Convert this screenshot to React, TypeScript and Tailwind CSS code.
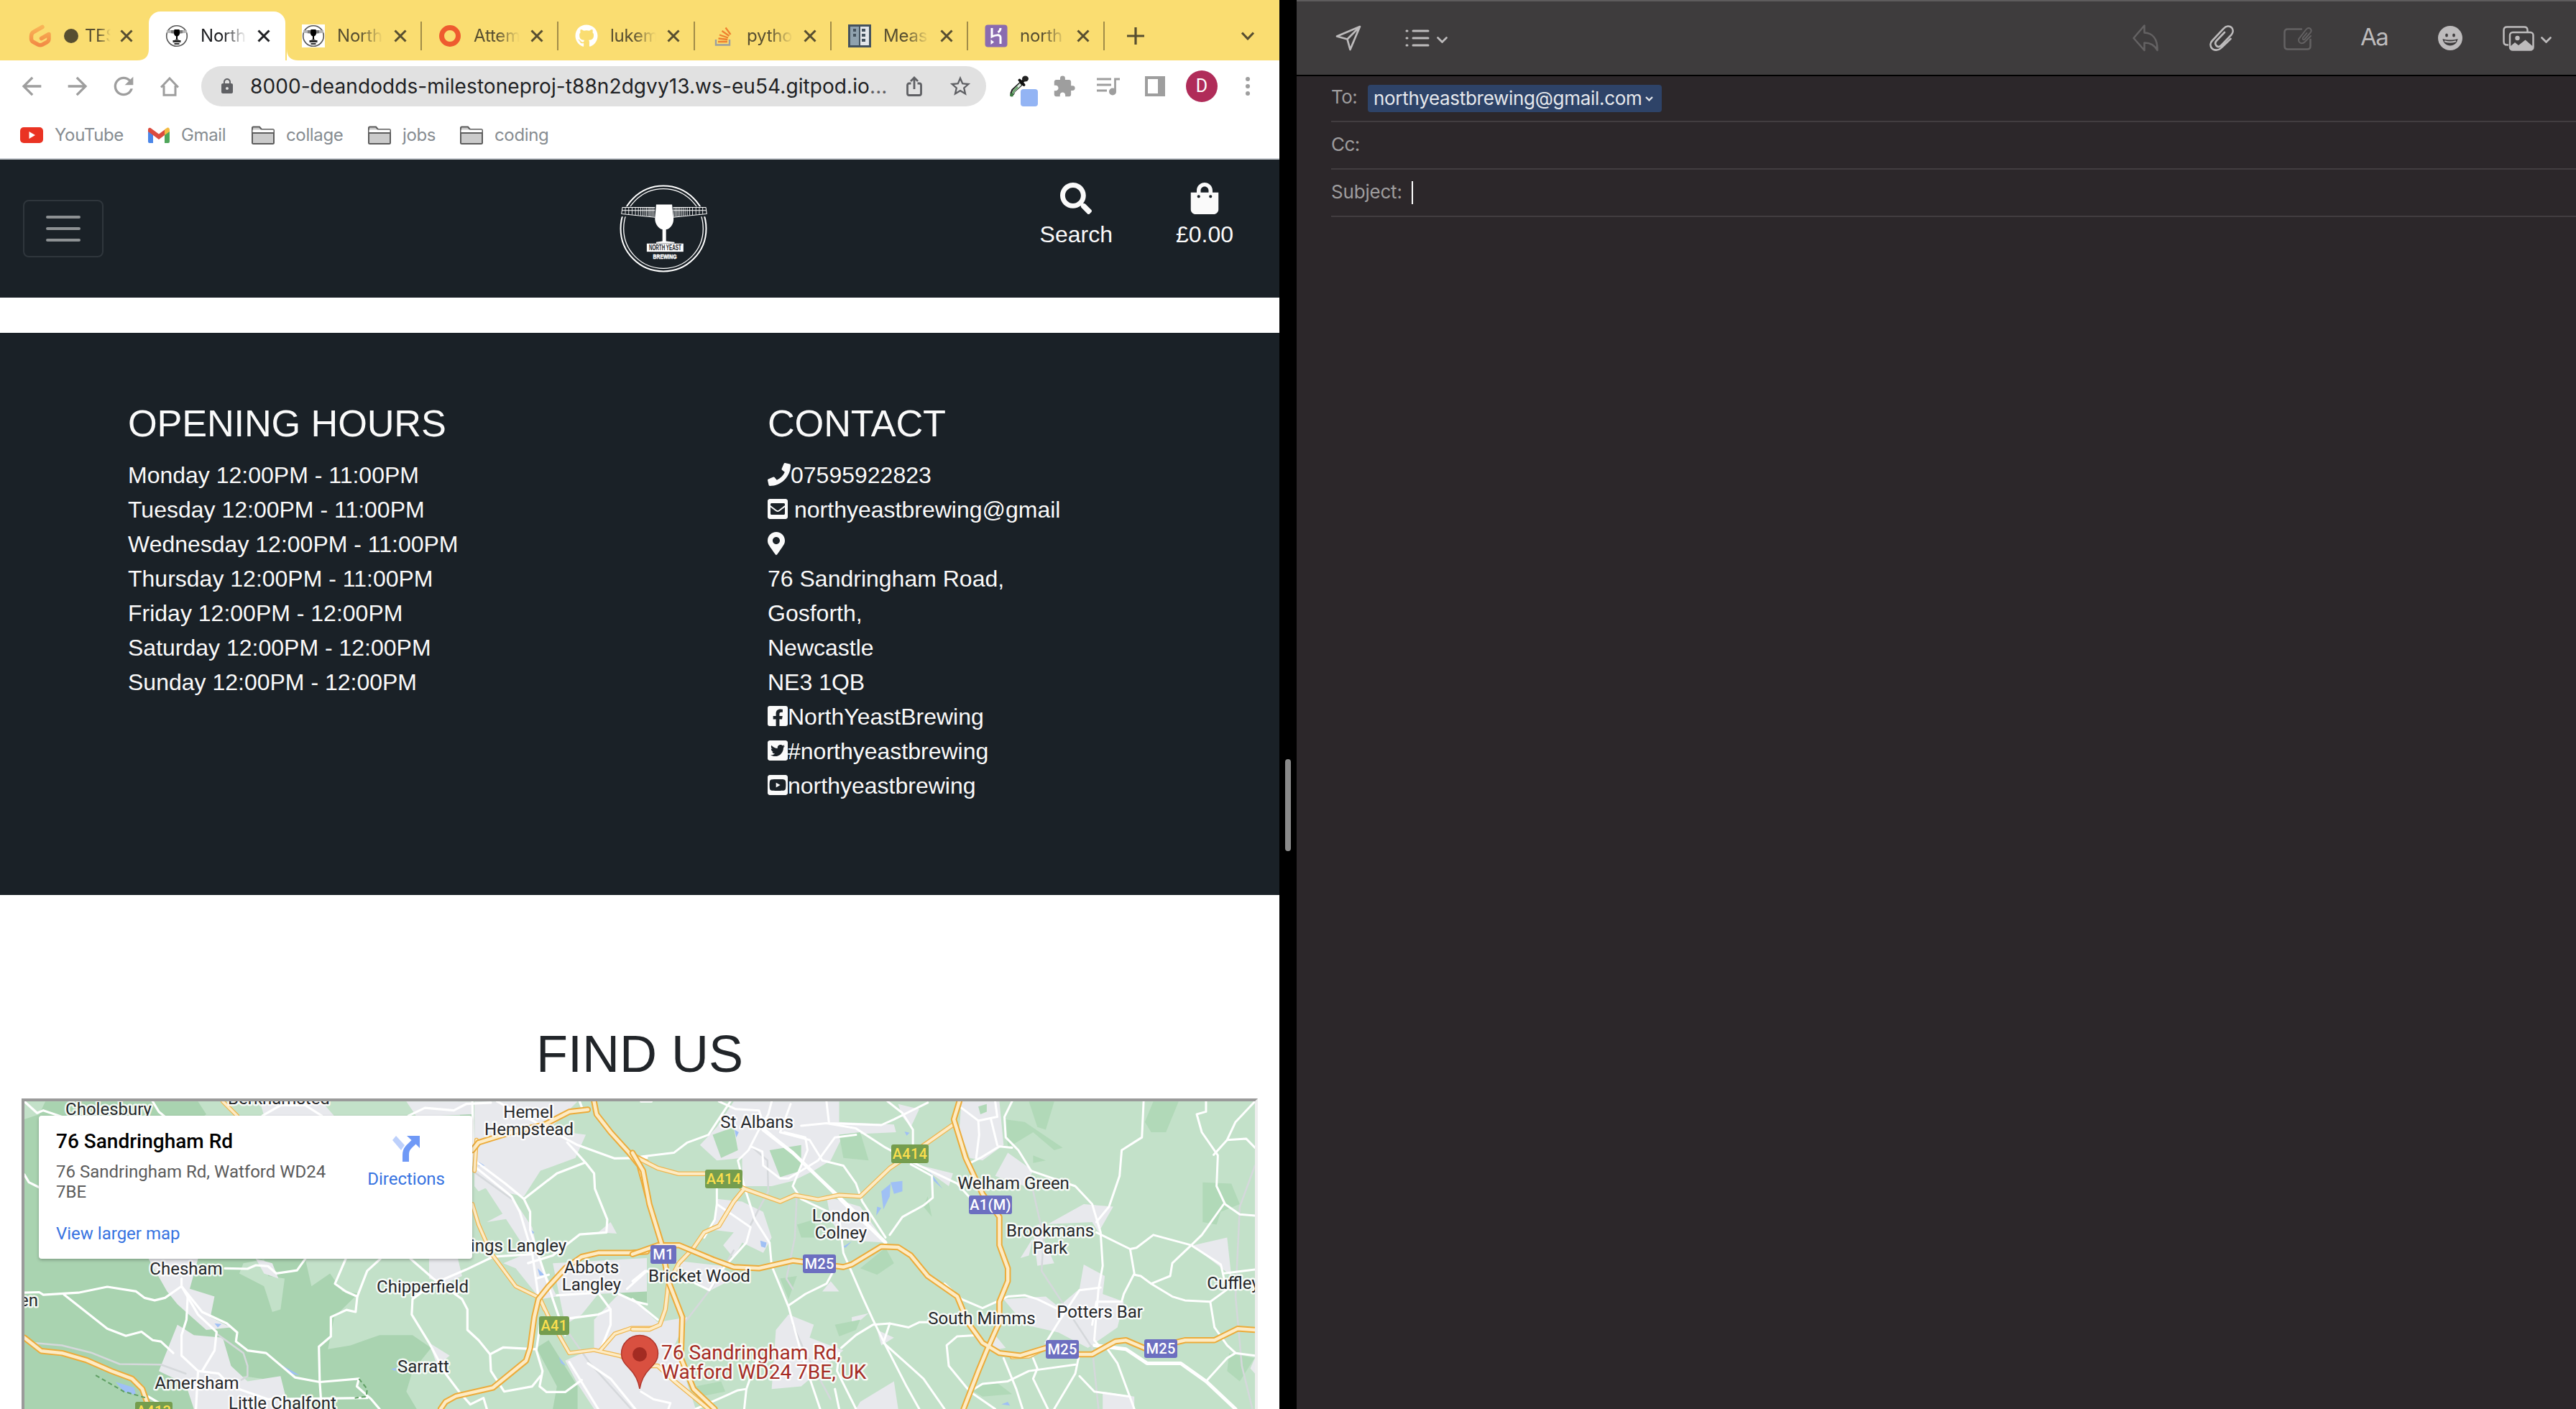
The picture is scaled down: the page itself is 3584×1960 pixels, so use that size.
import React from "react";
import {
  MdArrowBack,
  MdArrowForward,
  MdExtension,
  MdLock,
  MdRefresh,
  MdStarBorder,
} from "react-icons/md";
import {
  FaEnvelopeSquare,
  FaFacebookSquare,
  FaGithub,
  FaMapMarkerAlt,
  FaPhone,
  FaSearch,
  FaShoppingBag,
  FaTwitterSquare,
  FaYoutubeSquare,
} from "react-icons/fa";

/* ---------- brand artwork ---------- */

function BreweryLogo({ className, ink, paper }: { className: string; ink: string; paper: string }) {
  const leftBars = [52, 66, 80, 94, 106, 116, 125, 133, 140, 147, 153, 159, 165, 171];
  return (
    <svg viewBox="28 28 364 364" className={className}>
      <circle cx="210" cy="210" r="177.500" fill="none" stroke={ink} strokeWidth="6" />
      <circle cx="210" cy="210" r="165" fill="none" stroke={ink} strokeWidth="4" />
      <path d="M20 118H400V160H20z" fill={paper} />
      <g fill="none" stroke={ink} strokeWidth="3">
        <path d="M40 122L175 122M38 135H175M37 149L175 163M40 121L36 150" />
        <path d="M386 122L250 122M388 135H250M389 149L250 163M386 121L390 150" />
        {leftBars.map((x) => (
          <path key={x} strokeWidth="2.500" d={`M${x} 121V${148 + (x - 40) * 0.1}M${425 - x} 121V${148 + (x - 40) * 0.1}`} />
        ))}
      </g>
      <path d="M180 110H246L252 165C254 190 240 210 221 214V262L256 266V271H180V266L206 262V214C188 208 174 190 175 165Z" fill={ink} />
      <rect x="141" y="272" width="152" height="34" fill={ink} />
      <text x="217" y="300" textAnchor="middle" textLength="134" lengthAdjust="spacingAndGlyphs" fontFamily="Liberation Sans" fontWeight="700" fontSize="31" fill={paper}>
        NORTH YEAST
      </text>
      <text x="216" y="334" textAnchor="middle" textLength="98" lengthAdjust="spacingAndGlyphs" fontFamily="Liberation Sans" fontWeight="700" fontSize="29" fill={ink} stroke={ink} strokeWidth="1.500">
        BREWING
      </text>
    </svg>
  );
}

/* Simplified mark that stays legible at tab size */
function BreweryFavicon() {
  return (
    <svg viewBox="0 0 32 32" className="size-8 text-[#1b1b1b]" fill="none">
      <circle cx="16" cy="16" r="14.300" stroke="#555" strokeWidth="1.600" />
      <path d="M2 8H13V13L2 11.500zM30 8H19V13L30 11.500z" fill="#b5b5b5" />
      <path d="M8 8H13V12.500L8 12zM24 8H19V12.500L24 12z" fill="#777" />
      <path d="M12.500 7H19.500L20 12C20 15 18 16 17 16.500V20.500L19.500 21.500H12.500L15 20.500V16.500C14 16 12 15 12 12z" fill="#000" />
      <path d="M10.500 22H21.500V25H10.500zM12.500 26H19.500V28H12.500z" fill="#2a2a2a" />
    </svg>
  );
}

function GitpodIcon() {
  return (
    <svg viewBox="0 0 32 32" className="size-8" fill="none">
      <path d="M19 3.500L7.500 10Q3.500 12 3.500 16V20Q3.500 23 6.500 24.500L13 28Q16 29.500 19 28L25.500 24.500Q28 23 28 20V13.500L17.500 19.500" stroke="url(#gp)" strokeWidth="5.500" strokeLinecap="round" strokeLinejoin="round" />
      <defs>
        <linearGradient id="gp" x1="0" y1="0" x2="0" y2="1">
          <stop stopColor="#f9b457" />
          <stop offset="1" stopColor="#f28a45" />
        </linearGradient>
      </defs>
    </svg>
  );
}

function StackIcon() {
  return (
    <svg viewBox="0 0 32 32" className="size-8" fill="none">
      <path d="M6 21V28.500H25V21" stroke="#9a9fa0" strokeWidth="2.400" />
      <path d="M9 24H22M9.500 19.500L22.300 21M11 14.500L23 18.500M14.500 9L24.500 16M19.500 4.500L26.500 14" stroke="#ee8130" strokeWidth="2.300" />
    </svg>
  );
}

function MeasureIcon() {
  return (
    <svg viewBox="0 0 32 32" className="size-8">
      <path d="M0 0H32V32H0z" fill="#44525e" />
      <path d="M3 3H15V29H3z" fill="#8fa1ae" />
      <path d="M17 3H29V29H17z" fill="#e3e6ea" />
      <path d="M7 6h4v4H7zM7 13h4v4H7zM19 6h5v4h-5zM19 13h5v4h-5zM19 20h5v4h-5z" fill="#44525e" />
    </svg>
  );
}

function HerokuIcon() {
  return (
    <svg viewBox="0 0 32 32" className="size-8">
      <rect x="0.500" y="0.500" width="31" height="31" rx="4" fill="#8a6bb0" />
      <path d="M10 5V17C14 15 22 13 22 18V27M22 5C22 8 20 10 18.500 11" fill="none" stroke="#fff" strokeWidth="3" />
      <path d="M8.500 21L13 24.500L8.500 28z" fill="#fff" />
    </svg>
  );
}

/* ---------- browser tab strip ---------- */

type TabProps = { icon: React.ReactNode; title: string; active?: boolean; divider?: boolean; dot?: boolean };

function Tab({ icon, title, active, divider, dot }: TabProps) {
  return (
    <div
      className={
        "relative flex h-[68px] w-[190px] shrink-0 items-center pl-[23px] " +
        (active ? "z-10 rounded-t-[16px] bg-white text-[#202124]" : "text-[#574e30]")
      }
    >
      {active && (
        <svg viewBox="0 0 224 16" className="absolute -left-4 bottom-0 h-4 w-[224px]">
          <path d="M0 16Q16 16 16 0V16zM224 16Q208 16 208 0V16z" fill="#fff" />
        </svg>
      )}
      <div className="flex size-8 items-center justify-center">{icon}</div>
      {dot ? <div className="ml-[17px] size-5 rounded-full bg-[#574e30]" /> : null}
      <div
        className={
          "overflow-hidden text-[24px] leading-8 whitespace-nowrap [mask-image:linear-gradient(to_right,black_50%,transparent)] " +
          (dot ? "ml-[9px] w-[36px] tracking-[-0.5px]" : "ml-[17px] w-[64px] tracking-[-0.2px]")
        }
      >
        {title}
      </div>
      <svg
        viewBox="0 0 18 18"
        className={(dot ? "ml-[13px]" : "ml-[15px]") + " size-[18px]"}
        fill="none"
        stroke="currentColor"
        strokeWidth="3"
      >
        <path d="M1.500 1.500L16.500 16.500M16.500 1.500L1.500 16.500" />
      </svg>
      {divider && <div className="absolute right-0 h-10 w-[2px] bg-[#a18c48]" />}
    </div>
  );
}

function TabStrip() {
  return (
    <div className="flex h-[84px] items-end bg-[#fadd71] pl-[17px]">
      <Tab icon={<GitpodIcon />} title="TES" dot />
      <Tab icon={<BreweryFavicon />} title="North" active />
      <Tab icon={<div className="bg-white"><BreweryFavicon /></div>} title="North" divider />
      <Tab icon={<div className="size-[30px] rounded-full border-[7px] border-[#ee5b2f]" />} title="Attem" divider />
      <Tab icon={<FaGithub className="size-8 text-white" />} title="lukem" divider />
      <Tab icon={<StackIcon />} title="pytho" divider />
      <Tab icon={<MeasureIcon />} title="Meas" divider />
      <Tab icon={<HerokuIcon />} title="north" divider />
      <div className="flex h-[68px] flex-1 items-center justify-between pr-[35px] pl-[31px] text-[#574e30]">
        <svg viewBox="0 0 24 24" className="size-6" stroke="currentColor" strokeWidth="3.200">
          <path d="M12 0V24M0 12H24" />
        </svg>
        <svg viewBox="0 0 18 12" className="h-3 w-[18px]" fill="none" stroke="currentColor" strokeWidth="3">
          <path d="M1 1.500L9 10L17 1.500" />
        </svg>
      </div>
    </div>
  );
}

/* ---------- browser toolbar ---------- */

function AddressBar() {
  return (
    <div className="ml-[31px] flex h-14 w-[1092px] shrink-0 items-center rounded-full bg-[#e1e1e1] pl-6 text-[#5f6064]">
      <MdLock className="size-6 shrink-0" />
      <div className="ml-[20px] w-[882px] shrink-0 text-[28px] leading-8 tracking-[0.080px] whitespace-nowrap text-[#202124]">
        8000-deandodds-milestoneproj-t88n2dgvy13.ws-eu54.gitpod.io<span className="text-[#5f6064]">...</span>
      </div>
      <svg viewBox="0 0 22 28" className="ml-[31px] h-7 w-[22px] shrink-0" fill="none" stroke="currentColor" strokeWidth="2.800">
        <path d="M6.500 10H4Q1.500 10 1.500 12.500V24Q1.500 26.500 4 26.500H18Q20.500 26.500 20.500 24V12.500Q20.500 10 18 10H15.500M11 18V3M6 7L11 2L16 7" />
      </svg>
      <MdStarBorder className="ml-[36px] size-[34px] shrink-0" />
    </div>
  );
}

function Toolbar() {
  return (
    <div className="flex h-[72px] items-center bg-white pl-6 text-[#9e9e9e]">
      <MdArrowBack className="size-10" />
      <MdArrowForward className="ml-6 size-10" />
      <MdRefresh className="ml-6 size-10" />
      <svg viewBox="0 0 26 27" className="ml-[31px] h-[27px] w-[26px]" fill="none" stroke="currentColor" strokeWidth="3">
        <path d="M1 14.500L13 2L25 14.500M5 12V25.300H21V12" />
      </svg>
      <AddressBar />
      <div className="relative ml-[32px] h-14 w-10">
        <svg viewBox="0 0 28 30" className="mt-[13px] h-[30px] w-7">
          <path d="M17 11L6 21L4 26" stroke="#222" strokeWidth="6" fill="none" />
          <path d="M16 12L7 21L5 25" stroke="#dfeee0" strokeWidth="3.200" fill="none" />
          <path d="M12 16L7 21L5 25" stroke="#69a76d" strokeWidth="2.600" fill="none" />
          <path d="M14.500 6.500L20.500 13M18 9L23 4" stroke="#111" strokeWidth="4" strokeLinecap="round" />
          <ellipse cx="22.500" cy="4.500" rx="4.500" ry="4" fill="#222" />
          <circle cx="3.500" cy="27" r="2.500" fill="#3d7a42" />
        </svg>
        <div className="absolute top-8 left-4 size-6 rounded-[4px] bg-[#93b4f4]" />
      </div>
      <MdExtension className="ml-[20px] size-[33px] shrink-0" />
      <svg viewBox="0 0 32 25" className="ml-[29px] h-[25px] w-8 shrink-0" fill="none" stroke="currentColor" strokeWidth="2.800">
        <path d="M0 2H20M0 10H20M0 18H14" />
        <path d="M25.500 19V2H32" />
        <circle cx="22" cy="19.500" r="5" fill="currentColor" stroke="none" />
      </svg>
      <div className="ml-[35px] h-7 w-7 border-4 border-r-[10px] border-[#9e9e9e]" />
      <div className="ml-[29px] flex size-11 items-center justify-center rounded-full bg-[#b02c59] font-['Roboto'] text-[25px] text-white">D</div>
      <div className="ml-[39px] flex flex-col gap-1">
        <div className="h-[6px] w-[6px] rounded-full bg-[#9e9e9e]" />
        <div className="h-[6px] w-[6px] rounded-full bg-[#9e9e9e]" />
        <div className="h-[6px] w-[6px] rounded-full bg-[#9e9e9e]" />
      </div>
    </div>
  );
}

function Folder() {
  return (
    <svg viewBox="0 0 32 26" className="h-[26px] w-8 shrink-0" fill="#cbcbcb" stroke="#5c5c5c" strokeWidth="2">
      <path d="M1 24V3Q1 1.500 2.500 1.500H11L14 5H29.500Q31 5 31 6.500V24Q31 25 29.500 25H2.500Q1 25 1 24z" />
      <path d="M1.500 5.500H30.500V9H1.500z" fill="#fff" stroke="none" />
      <path d="M1 10H31" />
    </svg>
  );
}

function Bookmarks() {
  return (
    <div className="flex h-16 items-center bg-white pl-7 text-[24px] tracking-[-0.350px] whitespace-nowrap text-[#868c91]">
      <svg viewBox="0 0 32 22" className="h-[22px] w-8">
        <rect width="32" height="22" rx="5" fill="#ea3323" />
        <path d="M12.500 6L21 11L12.500 16z" fill="#fff" />
      </svg>
      <div className="ml-[16px] w-[130px]">YouTube</div>
      <svg viewBox="0 0 30 22" className="h-[22px] w-[30px]">
        <path d="M0 3L7 8V22H2Q0 22 0 20z" fill="#4a86e8" />
        <path d="M30 3L23 8V22H28Q30 22 30 20z" fill="#4fa65a" />
        <path d="M23 3L27 .5Q30 0 30 4V6L23 11z" fill="#f3bb41" />
        <path d="M0 6V4Q0 0 3.500 1L15 9.500L23 3.500V11L15 17L7 11z" fill="#dc4b3e" />
      </svg>
      <div className="ml-[16px] w-[98px]">Gmail</div>
      <Folder />
      <div className="ml-[16px] w-[114px]">collage</div>
      <Folder />
      <div className="ml-[16px] w-[80px]">jobs</div>
      <Folder />
      <div className="ml-[16px]">coding</div>
    </div>
  );
}

/* ---------- brewery page ---------- */

function SiteNav() {
  return (
    <div className="flex h-[192px] items-start justify-between bg-[#1a2127] px-8 text-[#fafafa]">
      <div className="w-[300px]">
        <div className="mt-14 flex h-20 w-[112px] flex-col items-center justify-center gap-3 rounded-lg border-2 border-[#2f363c]">
          <div className="h-1 w-12 rounded-full bg-[#8d9193]" />
          <div className="h-1 w-12 rounded-full bg-[#8d9193]" />
          <div className="h-1 w-12 rounded-full bg-[#8d9193]" />
        </div>
      </div>
      <BreweryLogo className="mt-[35px] ml-[66px] size-[122px]" ink="#fff" paper="#1a2127" />
      <div className="flex w-[300px] justify-end gap-[88px] pr-[32px] text-[32px] leading-[48px]">
        <div className="flex flex-col items-center">
          <FaSearch className="mt-8 size-11" />
          <div className="mt-[4px]">Search</div>
        </div>
        <div className="flex flex-col items-center">
          <FaShoppingBag className="mt-8 size-11" />
          <div className="mt-[4px]">£0.00</div>
        </div>
      </div>
    </div>
  );
}

const hours = [
  "Monday 12:00PM - 11:00PM",
  "Tuesday 12:00PM - 11:00PM",
  "Wednesday 12:00PM - 11:00PM",
  "Thursday 12:00PM - 11:00PM",
  "Friday 12:00PM - 12:00PM",
  "Saturday 12:00PM - 12:00PM",
  "Sunday 12:00PM - 12:00PM",
];

function InfoSection() {
  return (
    <div className="mt-[49px] grid h-[782px] grid-cols-2 bg-[#1a2127] pt-[95px] text-[32px] leading-[48px] text-[#fafafa]">
      <div className="pl-[178px]">
        <h3 className="mb-4 h-[63px] text-[52.300px] leading-[63px] tracking-[-0.150px]">OPENING HOURS</h3>
        {hours.map((h) => (
          <div key={h}>{h}</div>
        ))}
      </div>
      <div className="pl-[178px]">
        <h3 className="mb-4 h-[63px] text-[52.300px] leading-[63px] tracking-[-0.150px]">CONTACT</h3>
        <div className="flex items-center"><FaPhone className="relative -top-px size-8" />07595922823</div>
        <div className="flex items-center gap-[9px]"><FaEnvelopeSquare className="relative -top-px h-8 w-7" />northyeastbrewing@gmail</div>
        <div className="flex h-12 items-center"><FaMapMarkerAlt className="relative -top-px h-8 w-6" /></div>
        <div>76 Sandringham Road,</div>
        <div>Gosforth,</div>
        <div>Newcastle</div>
        <div>NE3 1QB</div>
        <div className="flex items-center"><FaFacebookSquare className="relative -top-px h-8 w-7" />NorthYeastBrewing</div>
        <div className="flex items-center"><FaTwitterSquare className="relative -top-px h-8 w-7" />#northyeastbrewing</div>
        <div className="flex items-center"><FaYoutubeSquare className="relative -top-px h-8 w-7" />northyeastbrewing</div>
      </div>
    </div>
  );
}

/* ---------- map ---------- */

const westWoods = [
  "59,370 480,370 500,420 420,520 590,700 870,983 880,1100 810,1210 795,1335 850,1320 920,1280 1000,1280 1045,1330 1000,1420 985,1500 1010,1568 59,1568",
  "1110,370 1145,370 1145,540 1120,480",
  "1190,400 1220,470 1180,440",
  "1450,1090 1520,1050 1568,1100 1568,1160 1500,1120",
  "1300,1330 1350,1480 1340,1568 1400,1568 1400,1480 1330,1300",
];
const westClearings = [
  "590,1000 640,985 650,1050 690,1060 680,1180 660,1190 640,1090 580,1040",
  "740,983 920,983 880,1120 830,1110 800,1040 755,1090",
  "59,370 110,370 95,420 59,440",
  "590,1440 680,1460 690,1568 570,1568",
];
const westTowns = [
  "985,370 1145,370 1145,420 1010,430",
  "630,370 780,370 810,426 640,426",
  "1150,370 1400,370 1330,480 1420,500 1395,590 1310,640 1270,740 1150,700",
  "1150,640 1240,740 1290,860 1310,1000 1350,1130 1310,1140 1250,1020 1220,1000 1280,960",
  "1180,840 1250,780 1260,820",
  "360,983 480,983 460,1100 520,1130 510,1210 560,1250 500,1260 430,1160 405,1110",
  "620,983 660,1000 675,1060 640,1040",
  "1040,983 1110,983 1120,1050 1080,1080 1040,1060",
  "430,1240 470,1280 540,1290 560,1400 600,1460 680,1440 700,1568 470,1568 450,1470 385,1420",
  "1340,1000 1568,980 1568,1110 1450,1120 1410,1200 1370,1240",
  "1440,1220 1500,1120 1568,1180 1568,1568 1440,1568 1400,1470 1370,1380 1440,1330",
  "1040,1310 1090,1360 1060,1400",
  "1450,880 1480,840 1495,885",
  "1150,700 1200,690 1160,720",
];
const westRoads = [
  "59,370 90,415 105,405 150,430",
  "370,370 385,410 400,430",
  "636,426 680,385 740,385 780,426",
  "990,426 1030,395 1100,405 1130,380 1190,375",
  "1145,370 1148,620 1240,740 1260,800 1290,960 1305,1130",
  "1205,370 1400,540 1490,592 1568,590",
  "1405,370 1412,400",
  "1375,530 1420,610 1440,650 1442,710 1472,830 1470,880 1405,888 1340,970 1280,1000",
  "1150,600 1225,690 1270,750 1350,650 1418,608",
  "1270,750 1285,800 1285,870 1320,1040 1340,1140 1370,1280",
  "995,983 1050,1060 1120,1140 1133,1180 1133,1260 1160,1300 1188,1355 1190,1420 1222,1500 1290,1480 1310,1440",
  "1050,1080 1130,1025 1195,975 1290,965",
  "1050,1080 1000,1140 998,1200 1040,1310 1080,1430 1115,1505",
  "59,1115 95,1113 105,1123 190,1115 260,1092 330,1110 350,1135 375,1145 400,1135 440,1090",
  "155,1122 260,1255 305,1283 343,1267 370,1300 390,1305 420,1350",
  "440,1060 440,1090 490,1190 550,1235 575,1270 572,1305 600,1340 645,1350 715,1445 775,1463 870,1450 865,1480 900,1530 920,1568",
  "455,1130 452,1220 440,1280 440,1360 480,1420 475,1568",
  "440,1090 480,1200 525,1268 520,1340 490,1420",
  "480,1420 530,1430 560,1480 650,1530 890,1525",
  "775,1463 773,1325 802,1285 802,1210 840,1182 862,1190 866,1130 838,1110 812,1080 838,983",
  "866,1130 890,1030 922,983",
  "545,1020 600,1022 620,1008 650,1012 670,1040 720,1028 740,983",
  "59,655 70,685 95,705",
  "775,1463 778,1530",
  "1188,1355 1220,1328 1300,1335",
  "1300,1060 1330,1045",
  "1350,1125 1450,1115 1480,1180 1480,1240 1455,1340",
  "1380,1215 1450,1200 1480,1180",
  "1310,1230 1300,1340 1315,1420 1308,1480 1325,1502 1370,1502 1410,1455",
  "1380,1385 1450,1568",
  "1425,1390 1480,1450 1540,1568",
  "1500,1120 1540,1150 1568,1160",
  "1520,1100 1568,1030",
  "360,1520 410,1568",
  "1115,1505 1140,1550 1172,1525 1180,1568",
];
const westMain = [
  "1440,370 1446,420 1480,490 1525,570 1550,620 1562,690 1570,740",
  "1145,560 1160,530 1240,490 1320,460 1380,410 1425,402",
  "1568,955 1530,960 1450,960 1410,975 1370,1020 1330,1090 1305,1140 1295,1210 1285,1330 1275,1380 1195,1485 1105,1518 1080,1540 1068,1568",
  "59,1290 100,1342 150,1350 210,1378 270,1420 320,1450 345,1490 362,1568",
];
const westMinor = [
  "1145,770 1160,850 1190,960 1250,1090 1308,1135 1330,1210 1380,1350 1440,1338 1500,1360 1568,1400",
  "1455,1340 1490,1275 1530,1253 1580,1253",
  "1150,640 1155,520",
  "540,370 575,426",
  "1525,570 1568,605",
  "1308,1135 1320,1180",
];

const eastWoods = [
  "190,500 240,470 250,560 210,590",
  "490,500 540,490 560,600 500,590",
  "325,560 400,540 400,640 350,665",
  "885,440 930,450 1020,550 1000,560 950,490 890,550",
  "1235,370 1295,370 1265,490 1230,490 1215,450",
  "940,370 1000,370 980,480 960,470",
  "1352,685 1420,690 1440,770 1395,800 1385,850 1352,840",
  "540,1020 600,940 620,1000 580,1045",
  "480,1240 540,1220 530,1260 490,1285",
  "1415,1350 1475,1370 1440,1460 1410,1420",
  "700,740 710,820 690,780",
  "950,580 980,600 950,610",
  "350,1060 390,1050 370,1140",
  "150,1480 210,1460 220,1500 160,1520",
  "800,1490 860,1460 900,1510 830,1520",
  "390,850 430,830 440,900 400,900",
  "820,390 840,380 840,410 825,420",
];
const eastTowns = [
  "240,370 490,370 490,450 620,460 625,490 500,500 470,600 430,640 380,680 330,700 260,700 260,590 200,600 160,540 200,470",
  "630,380 680,400 660,470 640,430",
  "780,370 870,370 880,540 830,600 800,590 775,480",
  "200,750 260,760 310,800 330,900 310,960 260,920 240,980 215,930 240,880 190,870",
  "460,740 540,780 600,920 500,910 470,830",
  "890,570 950,640 930,700 860,660",
  "1070,770 1140,780 1105,880 1090,840 960,850 1000,1000 960,1010 950,880",
  "660,610 760,650 750,700 690,630",
  "1330,930 1410,900 1420,1050 1390,1010 1350,960",
  "880,1140 980,1130 1010,1170 1060,1100 1070,1005 1120,1050 1115,1120 1165,1150 1150,1250 1080,1330 1010,1270 930,1240",
  "340,1260 370,1200 430,1240 420,1290 500,1340 400,1480 330,1490",
  "0,1140 60,1230 130,1210 100,1320 120,1420 150,1568 0,1568",
  "100,990 210,1010 240,1060 180,1110 130,1040",
  "520,1210 560,1195 520,1250",
  "450,1110 470,1070 490,1110",
  "580,1260 620,1290 590,1320",
  "540,1540 620,1460 630,1568 530,1568",
  "1115,1500 1190,1520 1190,1568 1115,1568",
  "860,1280 885,1330 850,1340",
  "1465,1410 1476,1370 1476,1430",
  "920,980 950,900 940,970",
];
const eastRoads = [
  "232,370 180,500 130,530 98,570 20,585",
  "205,370 245,400 300,405 315,480 400,600 440,665 520,800 600,920",
  "330,370 322,420 300,480 275,560 250,600 265,700 290,830 325,920 330,1010 370,1170 400,1350 445,1568",
  "460,370 466,455 590,462 620,440 700,375",
  "605,370 640,415 665,480 665,590",
  "400,465 460,455 530,475 600,550 680,620 770,690 800,745",
  "375,380 350,490 420,520 450,600 500,620 530,690 545,760 600,900",
  "280,545 308,565 310,620 350,670 370,670 440,600 480,510 530,500",
  "360,490 410,510 415,560 400,620 380,700 400,750 490,820 500,960 545,1130 570,1220 600,1320 650,1480 680,1568",
  "20,370 45,370",
  "200,690 200,770 280,860 270,920 210,1030 182,1105",
  "200,770 195,830 170,900",
  "182,1105 150,1080 120,1040",
  "900,370 882,430 885,510 915,560 945,640 1050,700 1090,770 1110,880 1115,1010 1105,1100 1095,1300 1110,1330",
  "800,610 825,590 870,545 900,550",
  "780,395 820,445 822,500 815,590",
  "860,370 865,430 820,445",
  "850,440 865,540",
  "660,615 710,660 712,745 690,775 640,820 610,890",
  "1212,370 1208,510 1160,560 1155,660 1130,780 1100,840",
  "1100,880 1180,945 1195,940 1235,890 1325,930 1395,1005 1400,1040",
  "1180,945 1190,1040 1165,1120 1160,1150 1100,1150 1090,1240",
  "1190,1045 1205,1050 1230,1080 1275,1050 1280,1000 1325,930 1350,890 1402,770",
  "1230,1080 1280,1130 1310,1145 1370,1150 1408,1105 1400,1040 1476,1025",
  "1360,370 1360,410 1338,420 1350,490 1388,580 1385,700 1405,770 1440,810 1476,815",
  "1476,370 1430,450 1410,520 1378,578",
  "1410,520 1455,515 1476,550",
  "1370,1150 1380,1250 1410,1320 1430,1350 1476,1360",
  "740,1080 780,1140 830,1175 890,1130 930,1125 960,1140 1010,1180",
  "1000,1320 980,1310 1010,1230 1060,1105 1110,1095",
  "370,1165 410,1120 460,1080 480,1020",
  "480,1490 490,1568",
  "490,1350 485,1420 530,1568",
  "495,1330 530,1280 570,1240 610,1235 655,1250 680,1230 700,1230",
  "610,1235 595,1310 690,1450 740,1568",
  "820,1280 770,1285 745,1320 750,1400 800,1500 860,1568",
  "800,1500 830,1470 890,1460 940,1420 1050,1395",
  "880,1370 910,1490 925,1568",
  "1060,1350 1050,1430 1000,1568",
  "1060,1440 1095,1500 1180,1520",
  "1120,1320 1150,1390 1190,1568",
  "1360,1460 1410,1370 1430,1350",
  "950,1370 960,1410 950,1450 985,1568",
  "0,1070 30,1030 50,1040",
  "0,1140 60,1220",
  "20,1500 50,1530 90,1545 85,1568",
  "270,1490 265,1568",
  "150,1568 250,1495 270,1490 300,1350",
];
const eastHighways = ["1095,1320 1170,1335 1220,1390 1300,1390 1360,1460 1430,1568", "310,480 380,570 440,665 520,790 600,920"];
const eastMain = [
  "0,965 60,930 110,930 190,985 240,1015 300,1020 380,990 500,1015 520,1005 590,935 630,938 660,970 700,1050 770,1130 795,1230 830,1310 870,1350 920,1360 980,1330 1058,1355 1090,1355 1145,1305 1170,1300 1220,1335 1310,1300 1380,1300 1435,1255 1476,1260",
  "0,570 25,640 40,770 68,920 85,1070 118,1210 115,1370 145,1490 195,1568",
  "775,370 762,440 790,590 830,730 870,820 870,930 890,1020 890,1070 870,1150 870,1230 840,1340 820,1420 785,1568",
];
const eastMinor = [
  "0,580 60,630 110,652 200,652 265,710 350,760 385,735 440,752 490,735 540,740 610,630 700,530 765,455",
  "265,710 240,760 205,855 170,880 145,940 110,1000 85,1080 78,1180 65,1240 40,1258 0,1257",
  "0,1400 60,1400 100,1460 180,1568",
  "820,1415 840,1340",
  "900,1365 940,1362 980,1330",
];

const west = "matrix(0.57398 0 0 0.35714 -34 -132)";
const east = "matrix(0.58673 0 0 0.35714 846 -132)";

function Shapes({ list, fill }: { list: string[]; fill: string }) {
  return <>{list.map((p) => <polygon key={p} points={p} fill={fill} />)}</>;
}

function Roads({ list, stroke, width }: { list: string[]; stroke: string; width: number }) {
  return (
    <g fill="none" stroke={stroke} strokeWidth={width} strokeLinejoin="round" strokeLinecap="round">
      {list.map((p) => (
        <polyline key={p} points={p} vectorEffect="non-scaling-stroke" />
      ))}
    </g>
  );
}

const places: [string, number, number][] = [
  ["Cholesbury", 151, 1551],
  ["Berkhamsted", 388, 1536],
  ["Hemel", 735, 1555],
  ["Hempstead", 736, 1579],
  ["Kings Langley", 714, 1741],
  ["Abbots", 823, 1771],
  ["Langley", 823, 1795],
  ["Chesham", 259, 1773],
  ["Chipperfield", 588, 1798],
  ["Sarratt", 589, 1909],
  ["Amersham", 274, 1932],
  ["Little Chalfont", 393, 1960],
  ["en", 40, 1817],
  ["St Albans", 1053, 1569],
  ["London", 1170, 1699],
  ["Colney", 1170, 1723],
  ["Welham Green", 1410, 1654],
  ["Brookmans", 1461, 1720],
  ["Park", 1461, 1744],
  ["Bricket Wood", 973, 1783],
  ["South Mimms", 1366, 1842],
  ["Potters Bar", 1530, 1833],
  ["Cuffley", 1716, 1793],
];

const shields: [string, number, number, number, boolean][] = [
  ["A41", 750, 1831, 42, true],
  ["A413", 188, 1950, 52, true],
  ["A414", 981, 1627, 52, true],
  ["A414", 1240, 1592, 52, true],
  ["A1(M)", 1348, 1663, 60, false],
  ["M1", 905, 1732, 36, false],
  ["M25", 1117, 1745, 46, false],
  ["M25", 1455, 1864, 46, false],
  ["M25", 1592, 1863, 46, false],
];

function MapCanvas() {
  return (
    <svg viewBox="0 0 1712 428" className="block h-[428px] w-[1712px] bg-[#c3e1c9] font-['Roboto']">
      <g transform={west}>
        <Shapes list={westWoods} fill="#a9d3b0" />
        <Shapes list={westClearings} fill="#c3e1c9" />
        <Shapes list={westTowns} fill="#e8e9ed" />
      </g>
      <g transform={east}>
        <Shapes list={eastTowns} fill="#e8e9ed" />
        <Shapes list={eastWoods} fill="#b1d9b8" />
        <Shapes list={["590,720 612,690 610,740 595,790", "612,685 640,680 640,720 620,730", "705,645 735,710 715,680", "303,912 318,920 315,940 305,935", "500,935 520,915 505,940", "242,480 252,490 246,510", "580,780 590,785 578,815", "645,487 657,492 650,503", "875,1550 890,1540 895,1555"]} fill="#9fc0f5" />
      </g>
      <g transform={west}>
        <Shapes list={["520,1235 537,1237 528,1250", "670,1385 727,1437 710,1432", "280,1462 325,1485 330,1515 300,1500", "1355,1365 1372,1400 1360,1390", "1303,1020 1322,1050 1308,1048", "1287,870 1295,880 1288,893", "948,1412 960,1408 958,1420", "1160,605 1175,620 1160,622"]} fill="#9fc0f5" />
        <Roads list={["75,1310 150,1320 220,1348 290,1393 390,1395 450,1430", "525,1275 590,1350 600,1400 600,1440 585,1455", "1145,640 1240,750", "1330,1100 1360,1230 1430,1390 1530,1568"]} stroke="#d5d8db" width={2.5} />
        <Roads list={westRoads} stroke="#ffffff" width={3.2} />
      </g>
      <g transform={east}>
        <Roads list={["285,550 320,600 322,720 280,850", "390,720 385,900 365,1060 380,1100", "950,720 975,900 970,1030 1010,1130 1090,1330 1105,1568", "1476,620 1440,780 1430,1130 1445,1400 1470,1568", "240,950 190,1090 120,1240", "380,1240 410,1350 470,1530"]} stroke="#d5d8db" width={2.5} />
        <Roads list={eastRoads} stroke="#ffffff" width={3} />
        <Roads list={eastHighways} stroke="#ffffff" width={5} />
      </g>
      <g transform={west}>
        <Roads list={westMinor} stroke="#efb650" width={6} />
        <Roads list={westMinor} stroke="#fdebc4" width={3.5} />
      </g>
      <g transform={east}>
        <Roads list={eastMinor} stroke="#efb650" width={6.5} />
        <Roads list={eastMinor} stroke="#fdebc4" width={4} />
      </g>
      <g transform={west}>
        <Roads list={westMain} stroke="#ecab3a" width={8.5} />
        <Roads list={westMain} stroke="#fdebc4" width={4.5} />
      </g>
      <g transform={east}>
        <Roads list={eastMain} stroke="#ecab3a" width={8.5} />
        <Roads list={eastMain} stroke="#fdebc4" width={4.5} />
      </g>
      <g transform={west} fill="none" stroke="#5f9f63" strokeWidth="2" strokeDasharray="6 4">
        <polyline points="232,1437 300,1500 355,1525" vectorEffect="non-scaling-stroke" />
        <polyline points="870,1450 890,1490 888,1520 860,1525" vectorEffect="non-scaling-stroke" />
      </g>
      <g transform="translate(-34 -1532)" textAnchor="middle">
        {shields.map(([label, x, y, w, green]) => (
          <g key={x}>
            <rect x={x} y={y} width={w} height="26" rx="3" fill={green ? "#759d4e" : "#6c6fc0"} />
            <text x={x + w / 2} y={y + 20} fontSize="20" fontWeight="500" letterSpacing="0.300" fill={green ? "#fbdf4e" : "#ffffff"}>
              {label}
            </text>
          </g>
        ))}
        <g fontSize="24" fill="#26282b" stroke="#ffffff" strokeOpacity="0.850" strokeWidth="5" strokeLinejoin="round" paintOrder="stroke">
          {places.map(([name, x, y]) => (
            <text key={name} x={x} y={y}>
              {name}
            </text>
          ))}
        </g>
        <g fontSize="28" textAnchor="start" fill="#a52b23" stroke="#ffffff" strokeOpacity="0.850" strokeWidth="5" strokeLinejoin="round" paintOrder="stroke">
          <text x="920" y="1891">76 Sandringham Rd,</text>
          <text x="920" y="1918">Watford WD24 7BE, UK</text>
        </g>
        <path d="M890 1932C888 1920 884 1912 876 1904C868 1896 864.500 1891 864.500 1883A25.500 25.500 0 0 1 915.500 1883C915.500 1891 912 1896 904 1904C896 1912 892 1920 890 1932Z" fill="#d95040" stroke="#b0362b" strokeWidth="1.500" />
        <circle cx="890" cy="1884" r="10" fill="#a32b22" />
      </g>
    </svg>
  );
}

function PlaceCard() {
  return (
    <div className="absolute top-5 left-5 flex h-[199px] w-[603px] justify-between rounded-[4px] bg-white pr-[38px] pl-[24px] font-['Roboto'] shadow-[0_2px_4px_rgba(0,0,0,0.25)]">
      <div>
        <div className="mt-5 text-[28px] leading-8 font-medium text-black">76 Sandringham Rd</div>
        <div className="mt-3 w-[400px] text-[24px] leading-7 text-[#5b5b5b]">
          76 Sandringham Rd, Watford WD24
          <br />
          7BE
        </div>
        <div className="mt-[30px] text-[24px] leading-7 text-[#3773e1]">View larger map</div>
      </div>
      <div className="flex flex-col items-center">
        <svg viewBox="0 0 38 36" className="mt-7 h-9 w-[38px]">
          <path d="M5 0L17 13L12 20L0 6z" fill="#bdd0fb" />
          <path d="M38 0V17L32.500 11.500C26 18 23 19 23 27V36H14V27C14 16 20 13 26.500 6L20 0z" fill="#6f99f6" />
        </svg>
        <div className="mt-[10px] text-[24px] leading-7 text-[#3773e1]">Directions</div>
      </div>
    </div>
  );
}

function FindUs() {
  return (
    <div className="flex flex-col items-center pt-[178px] text-[#212529]">
      <h1 className="h-[105px] text-[72px] leading-[86px]">FIND US</h1>
      <div className="relative h-[432px] w-[1720px] overflow-hidden border-4 border-b-0 border-t-[#9a9a9a] border-r-[#eeeeee] border-l-[#9a9a9a]">
        <MapCanvas />
        <PlaceCard />
      </div>
    </div>
  );
}

function BrowserWindow() {
  return (
    <div className="h-[1960px] w-[1780px] shrink-0 overflow-hidden bg-white font-['Liberation_Sans',sans-serif]">
      <div className="font-['Inter',sans-serif]">
        <TabStrip />
        <Toolbar />
        <Bookmarks />
        <div className="h-[2px] bg-[#c9cdd2]" />
      </div>
      <SiteNav />
      <InfoSection />
      <FindUs />
    </div>
  );
}

/* ---------- mail composer ---------- */

function MailToolbar() {
  return (
    <div className="flex h-[106px] items-center border-t-2 border-b-2 border-t-[#5e5c5d] border-b-black bg-[#3e3c3d] pl-[54px] text-[#bdbbbc]">
      <svg viewBox="0 0 36 36" className="size-9 shrink-0" fill="none" stroke="currentColor" strokeWidth="2.700" strokeLinejoin="round">
        <path d="M34 2L2 15.500L16.500 19.500L20.500 34zM34 2L16.500 19.500" />
      </svg>
      <svg viewBox="0 0 34 24" className="ml-[61px] h-6 w-[34px] shrink-0" stroke="currentColor" strokeWidth="3" strokeLinecap="round">
        <path d="M2 2H3M2 12H3M2 22H3M11 2H32M11 12H32M11 22H32" />
      </svg>
      <svg viewBox="0 0 15 9" className="mt-1 ml-[10px] h-[9px] w-[15px] shrink-0" fill="none" stroke="currentColor" strokeWidth="2.700" strokeLinecap="round">
        <path d="M1.500 1.500L7.500 7.500L13.500 1.500" />
      </svg>
      <svg viewBox="0 0 36 38" className="ml-[953px] h-[38px] w-9 shrink-0 text-[#646263]" fill="none" stroke="currentColor" strokeWidth="2.500" strokeLinejoin="round">
        <path d="M16.500 1.500L1.500 19L16.500 36V25.500C26 25.500 31 29 34.500 36C35 20 28 12 16.500 11.500z" />
      </svg>
      <svg viewBox="0 0 34 36" className="ml-[71px] h-9 w-[34px] shrink-0" fill="none" stroke="currentColor" strokeWidth="2.600" strokeLinecap="round">
        <path d="M29.500 19L17 31C12.500 36 5.500 35.500 2.800 31.500C.5 28 1.500 24 4 21.500L20 4.500C23 1 28 .5 31 3.500C33.500 6.500 33 10.500 30.500 13.500L16.500 28C14 30.500 11.500 30.500 9.500 28.500C7.500 26 8 23.500 10 21.500L21 10" />
      </svg>
      <svg viewBox="0 0 40 33" className="ml-[69px] h-[33px] w-10 shrink-0 text-[#646263]" fill="none" stroke="currentColor" strokeWidth="2.500" strokeLinecap="round">
        <path d="M25 3.500H6Q1.500 3.500 1.500 8V27Q1.500 31.500 6 31.500H33Q37.500 31.500 37.500 27V18" />
        <path strokeWidth="1.900" d="M38 13L29.500 21.500C27 24 23.500 23.500 22 21.500C20.500 19 21 17 22.500 15.500L31.500 4C33.500 1.500 36 1.500 37.500 3C39 4.500 39 6.500 37.500 8.500L29.500 17.500C28 19 26 18 27 15.500L32.500 9" />
      </svg>
      <div className="ml-[67px] w-[42px] shrink-0 pb-1 text-[33px] leading-9 tracking-[-1.500px]">Aa</div>
      <svg viewBox="0 0 34 34" className="ml-[66px] size-[34px] shrink-0">
        <circle cx="17" cy="17" r="17" fill="currentColor" />
        <ellipse cx="12" cy="13" rx="1.900" ry="2.500" fill="#3e3c3d" />
        <ellipse cx="22" cy="13" rx="1.900" ry="2.500" fill="#3e3c3d" />
        <path d="M6.500 18C12 20 22 20 27.500 18C26.500 24 22.500 27.500 17 27.500S7.500 24 6.500 18z" fill="#3e3c3d" />
        <path d="M9 21.300Q17 23.800 25 21.300" fill="none" stroke="currentColor" strokeWidth="2" />
      </svg>
      <svg viewBox="0 0 44 35" className="ml-[56px] h-[35px] w-11 shrink-0" fill="none" stroke="currentColor" strokeWidth="2.500">
        <path d="M8 26.500H6Q1.500 26.500 1.500 22V6Q1.500 1.500 6 1.500H30Q34.500 1.500 34.500 6V8" />
        <rect x="10" y="9" width="32.500" height="24.500" rx="4" />
        <circle cx="20.500" cy="17" r="3.200" fill="currentColor" stroke="none" />
        <path d="M10 29L17 23L22 27L31.500 19.500L42.500 29V33H10z" fill="currentColor" stroke="none" />
      </svg>
      <svg viewBox="0 0 15 9" className="mt-1 ml-[9px] h-[9px] w-[15px] shrink-0" fill="none" stroke="currentColor" strokeWidth="2.700" strokeLinecap="round">
        <path d="M1.500 1.500L7.500 7.500L13.500 1.500" />
      </svg>
    </div>
  );
}

function MailWindow() {
  return (
    <div className="h-[1960px] flex-1 overflow-hidden bg-[#2c272a] font-['Inter',sans-serif] text-[26px] text-[#9f9d9e]">
      <MailToolbar />
      <div className="ml-12 flex h-16 items-center border-b-2 border-[#423d40]">
        <div className="w-[51px] pb-[5px] tracking-[-0.500px]">To:</div>
        <div className="flex h-[38px] w-[409px] items-center rounded-[4px] bg-[#2e4368] pl-[8px] tracking-[-0.300px] whitespace-nowrap text-[#e6e8ec]">
          <div className="w-[378px] pb-[2px]">northyeastbrewing@gmail.com</div>
          <svg viewBox="0 0 11 7" className="h-[7px] w-[11px]" fill="none" stroke="currentColor" strokeWidth="2.300">
            <path d="M1 1L5.500 5.500L10 1" />
          </svg>
        </div>
      </div>
      <div className="ml-12 flex h-[66px] items-center border-b-2 border-[#423d40] pb-[3px] tracking-[-0.500px]">Cc:</div>
      <div className="ml-12 flex h-[66px] items-center border-b-2 border-[#423d40] tracking-[-0.200px]">
        <div className="w-[112px] pb-[3px]">Subject:</div>
        <div className="h-8 w-[2px] bg-white" />
      </div>
    </div>
  );
}

export default function App() {
  return (
    <div className="flex h-[1960px] w-[3584px] overflow-hidden bg-black">
      <BrowserWindow />
      <div className="flex w-6 shrink-0 pt-[1056px] pl-2">
        <div className="h-32 w-2 rounded-full bg-[#8b8b8b]" />
      </div>
      <MailWindow />
    </div>
  );
}
